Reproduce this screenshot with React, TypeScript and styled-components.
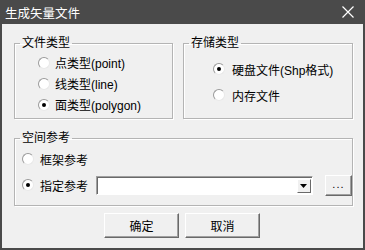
import styled, { createGlobalStyle } from "styled-components";

const GlobalStyle = createGlobalStyle`
  body {
    margin: 0;
    font-family: "Liberation Sans", "Noto Sans CJK SC", sans-serif;
    font-size: 12px;
    color: #000;
  }
`;

const Window = styled.div`
  width: 365px;
  height: 250px;
  box-sizing: border-box;
  background: #4a4a4a;
  padding: 0 2px 2px 2px;
  display: flex;
  flex-direction: column;
`;

const TitleBar = styled.div`
  height: 24px;
  flex-shrink: 0;
  display: flex;
  align-items: center;
  justify-content: space-between;
  padding: 0 9px 0 3px;
  color: #fff;
  font-size: 12.5px;
`;

const Body = styled.div`
  flex: 1;
  background: #f0f0f0;
  display: flex;
  flex-direction: column;
  padding: 11px 10px 0 12px;
`;

const TopRow = styled.div`
  display: flex;
  gap: 10px;
`;

const GroupBox = styled.fieldset<{ $w?: number; $h: number }>`
  margin: 0;
  padding: 0;
  box-sizing: border-box;
  width: ${(p) => (p.$w ? `${p.$w}px` : "auto")};
  height: ${(p) => p.$h}px;
  border: 1px solid #b4b4b4;
  box-shadow: inset 1px 1px #fff, 1px 1px #fff;
  min-inline-size: 0;
`;

const Legend = styled.legend`
  margin-left: 5px;
  padding: 0 2px;
  line-height: 16px;
  font-size: 12px;
`;

const RadioList = styled.div<{ $pl: number; $pt: number; $row: number }>`
  display: flex;
  flex-direction: column;
  padding: ${(p) => p.$pt}px 0 0 ${(p) => p.$pl}px;
  & > * {
    height: ${(p) => p.$row}px;
  }
`;

const RadioRow = styled.label<{ $gap?: number }>`
  display: flex;
  align-items: center;
  gap: ${(p) => p.$gap ?? 5}px;
  white-space: nowrap;
`;

const RadioDot = styled.span<{ $on?: boolean }>`
  width: 12px;
  height: 12px;
  box-sizing: border-box;
  border-radius: 50%;
  border: 1px solid;
  border-color: #9a9a9a #e8e8e8 #e8e8e8 #9a9a9a;
  background: #fff;
  display: flex;
  align-items: center;
  justify-content: center;
  flex-shrink: 0;
  &::after {
    content: "";
    width: 4px;
    height: 4px;
    border-radius: 50%;
    background: ${(p) => (p.$on ? "#000" : "transparent")};
  }
`;

const Combo = styled.div`
  width: 224px;
  height: 19px;
  box-sizing: border-box;
  margin-left: 2px;
  border: 1px solid;
  border-color: #a0a0a0 #fff #fff #a0a0a0;
  box-shadow: inset 1px 1px #696969;
  background: #fff;
  display: flex;
  justify-content: flex-end;
  padding: 2px 1px 1px 2px;
`;

const DropButton = styled.div`
  width: 14px;
  box-sizing: border-box;
  background: #f0f0f0;
  border: 1px solid;
  border-color: #fff #696969 #696969 #fff;
  display: flex;
  align-items: center;
  justify-content: center;
`;

const BrowseButton = styled.div`
  width: 28px;
  height: 21px;
  box-sizing: border-box;
  margin-left: 6px;
  border: 1px solid;
  border-color: #fff #696969 #696969 #fff;
  box-shadow: inset -1px -1px #a0a0a0;
  display: flex;
  align-items: center;
  justify-content: center;
  font-size: 11px;
  letter-spacing: 1px;
  padding-bottom: 3px;
`;

const ButtonRow = styled.div`
  display: flex;
  justify-content: center;
  gap: 6px;
  margin-top: 7px;
  padding-right: 3px;
`;

const PushButton = styled.div`
  width: 75px;
  height: 25px;
  box-sizing: border-box;
  border: 1px solid;
  border-color: #fff #696969 #696969 #fff;
  box-shadow: inset -1px -1px #a0a0a0;
  display: flex;
  align-items: center;
  justify-content: center;
`;

export default function App() {
  return (
    <>
      <GlobalStyle />
      <Window>
        <TitleBar>
          <span>生成矢量文件</span>
          <svg width="12" height="12" viewBox="0 0 12 12">
            <path d="M0.5 0.5 L11.5 11.5 M11.5 0.5 L0.5 11.5" stroke="#fff" strokeWidth="1.2" />
          </svg>
        </TitleBar>
        <Body>
          <TopRow>
            <GroupBox $w={159} $h={84}>
              <Legend>文件类型</Legend>
              <RadioList $pl={23} $pt={1} $row={21}>
                <RadioRow>
                  <RadioDot />
                  <span>点类型(point)</span>
                </RadioRow>
                <RadioRow>
                  <RadioDot />
                  <span>线类型(line)</span>
                </RadioRow>
                <RadioRow>
                  <RadioDot $on />
                  <span>面类型(polygon)</span>
                </RadioRow>
              </RadioList>
            </GroupBox>
            <GroupBox $w={170} $h={84}>
              <Legend>存储类型</Legend>
              <RadioList $pl={29} $pt={5} $row={26}>
                <RadioRow $gap={7}>
                  <RadioDot $on />
                  <span>硬盘文件(Shp格式)</span>
                </RadioRow>
                <RadioRow $gap={7}>
                  <RadioDot />
                  <span>内存文件</span>
                </RadioRow>
              </RadioList>
            </GroupBox>
          </TopRow>
          <GroupBox $h={76} style={{ marginTop: 11 }}>
            <Legend>空间参考</Legend>
            <RadioList $pl={7} $pt={0} $row={26}>
              <RadioRow $gap={6}>
                <RadioDot />
                <span>框架参考</span>
              </RadioRow>
              <RadioRow $gap={6}>
                <RadioDot $on />
                <span>指定参考</span>
                <Combo>
                  <DropButton>
                    <svg width="7" height="4" viewBox="0 0 7 4">
                      <path d="M0 0 H7 L3.5 4 Z" fill="#000" />
                    </svg>
                  </DropButton>
                </Combo>
                <BrowseButton>...</BrowseButton>
              </RadioRow>
            </RadioList>
          </GroupBox>
          <ButtonRow>
            <PushButton>确定</PushButton>
            <PushButton>取消</PushButton>
          </ButtonRow>
        </Body>
      </Window>
    </>
  );
}
